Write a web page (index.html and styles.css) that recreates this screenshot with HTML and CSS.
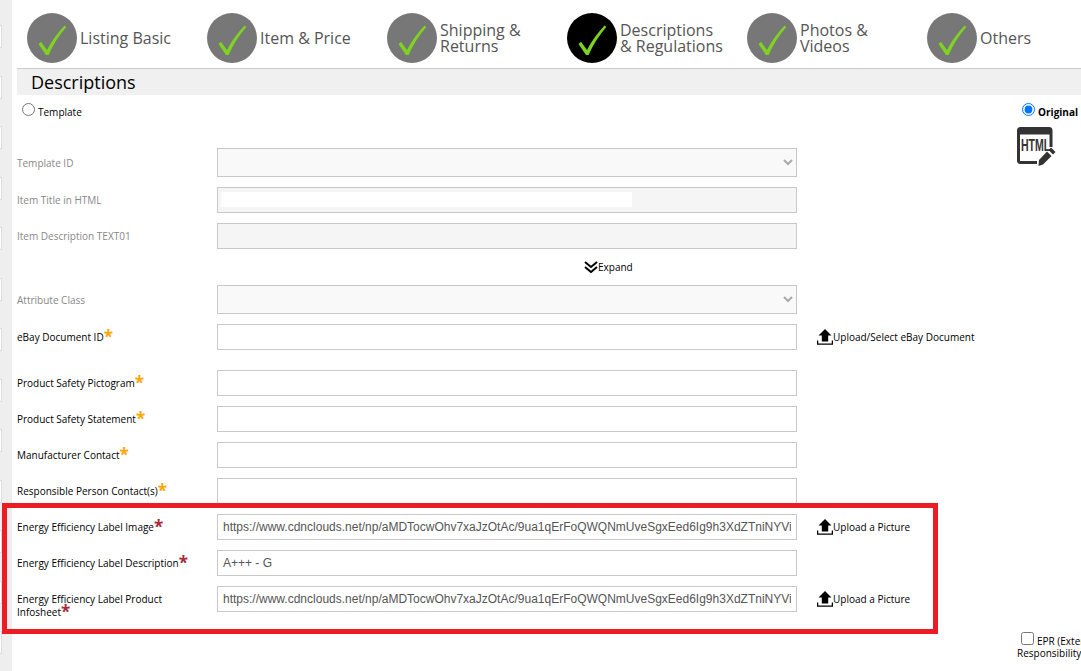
FILE: index.html
```html
<!DOCTYPE html>
<html lang="en">
<head>
<meta charset="utf-8">
<title>Descriptions</title>
<link rel="stylesheet" href="styles.css">
</head>
<body>
<svg class="defs" width="0" height="0" aria-hidden="true">
  <symbol id="check" viewBox="0 0 50 50">
    <path d="M11.5 31 L14 28.8 L20 37 C25 27 31 19.5 37.5 12.5 L39.3 14 C32 22.5 26 31.5 21.6 42 L19 42 Z"/>
  </symbol>
  <symbol id="upload" viewBox="0 0 16 16">
    <path d="M8 0 L14.5 6.5 H11.2 V12.5 H4.8 V6.5 H1.5 Z"/>
    <path class="tray" d="M.6 11.5 V15.2 H15.4 V11.5"/>
  </symbol>
</svg>
<div class="sidebar">
  <i></i><i></i><i></i><i></i><i></i><i></i><i></i><i></i><i></i><i></i><i></i><i></i><i></i>
</div>
<main class="main">
  <nav class="steps">
    <div class="step"><svg class="badge"><use href="#check"/></svg><span>Listing Basic</span></div>
    <div class="step"><svg class="badge"><use href="#check"/></svg><span>Item &amp; Price</span></div>
    <div class="step"><svg class="badge"><use href="#check"/></svg><span>Shipping &amp;<br>Returns</span></div>
    <div class="step active"><svg class="badge"><use href="#check"/></svg><span>Descriptions<br>&amp; Regulations</span></div>
    <div class="step"><svg class="badge"><use href="#check"/></svg><span>Photos &amp;<br>Videos</span></div>
    <div class="step"><svg class="badge"><use href="#check"/></svg><span>Others</span></div>
  </nav>
  <h1 class="title">Descriptions</h1>
  <div class="choice">
    <label class="radio"><input type="radio" name="mode"><span>Template</span></label>
    <div class="original">
      <label class="radio strong"><input type="radio" name="mode" checked><span>Original</span></label>
      <svg class="html-icon" viewBox="0 0 40 40" width="40" height="40">
        <path class="frame" d="M20 35.5 H3.5 Q1.5 35.5 1.5 33.5 V3.5 Q1.5 1.5 3.5 1.5 H32 Q34 1.5 34 3.5 V20"/>
        <rect class="bar" x="1.5" y="1.5" width="32.5" height="6"/>
        <text class="html-text" transform="translate(4 24) scale(.66 1)">HTML</text>
        <path class="pencil" d="M34 20.5 L38.5 25 L36 27.5 L31.5 23 Z M30 24.5 L34.5 29 L26 37.5 L21.5 39 L22 33 Z"/>
      </svg>
    </div>
  </div>
  <form class="form">
    <div class="row off tall"><label>Template ID</label><select disabled><option></option></select></div>
    <div class="row off"><label>Item Title in HTML</label><div class="field"><b></b></div></div>
    <div class="row off"><label>Item Description TEXT01</label><div class="field"></div></div>
    <div class="expand"><svg viewBox="0 0 14 12" width="14" height="12"><path d="M1 1 L7 6 L13 1 M1 6 L7 11 L13 6"/></svg><span>Expand</span></div>
    <div class="row off tall"><label>Attribute Class</label><select disabled><option></option></select></div>
    <div class="row gap"><label>eBay Document ID<em>*</em></label><input type="text"><a class="upload"><svg width="16" height="16"><use href="#upload"/></svg>Upload/Select eBay Document</a></div>
    <div class="row"><label>Product Safety Pictogram<em>*</em></label><input type="text"></div>
    <div class="row"><label>Product Safety Statement<em>*</em></label><input type="text"></div>
    <div class="row"><label>Manufacturer Contact<em>*</em></label><input type="text"></div>
    <div class="row"><label>Responsible Person Contact(s)<em>*</em></label><input type="text"></div>
    <div class="row"><label>Energy Efficiency Label Image<em class="req">*</em></label><input type="text" value="https://www.cdnclouds.net/np/aMDTocwOhv7xaJzOtAc/9ua1qErFoQWQNmUveSgxEed6Ig9h3XdZTniNYVi8kQ2pLx7"><a class="upload"><svg width="16" height="16"><use href="#upload"/></svg>Upload a Picture</a></div>
    <div class="row"><label>Energy Efficiency Label Description<em class="req">*</em></label><input type="text" value="A+++ - G"></div>
    <div class="row"><label>Energy Efficiency Label Product Infosheet<em class="req">*</em></label><input type="text" value="https://www.cdnclouds.net/np/aMDTocwOhv7xaJzOtAc/9ua1qErFoQWQNmUveSgxEed6Ig9h3XdZTniNYVi8kQ2pLx7"><a class="upload"><svg width="16" height="16"><use href="#upload"/></svg>Upload a Picture</a></div>
  </form>
  <div class="epr"><label class="radio"><input type="checkbox"><span>EPR (Extended Producer</span></label><div class="epr-line">Responsibility</div></div>
</main>
<div class="callout"></div>
</body>
</html>
```
FILE: styles.css
```css
* { box-sizing: border-box; }
html, body { height: 100%; }
body {
  margin: 0;
  display: flex;
  overflow: hidden;
  background: #fff;
  color: #000;
  font-family: "Open Sans", "Liberation Sans", sans-serif;
  font-size: 10px;
}
.defs { position: absolute; }
.sidebar {
  flex: 0 0 12px;
  background: #eee;
  display: flex;
  flex-direction: column;
  gap: 27.5px;
  padding-top: 25px;
}
.sidebar i {
  display: block;
  flex: none;
  width: 2px;
  height: 23px;
  background: #fff;
  border: 1px solid #ddd;
  border-left: 0;
}
.main { flex: 1; min-width: 0; padding-left: 5px; }
.steps {
  display: flex;
  height: 68px;
  padding: 13px 0 0 10px;
}
.step {
  flex: 0 0 180px;
  height: 50px;
  display: flex;
  align-items: center;
  gap: 3px;
  font-size: 16px;
  line-height: 16px;
  color: #555;
}
.badge {
  flex: none;
  width: 50px;
  height: 50px;
  border-radius: 50%;
  background: #777;
  fill: #7ed321;
}
.active .badge { background: #000; }
.title {
  margin: 0;
  height: 27px;
  padding-left: 14px;
  border-top: 1px solid #ccc;
  background: #f0f0f0;
  font-size: 18px;
  font-weight: 400;
  line-height: 27px;
}
.choice {
  height: 53px;
  display: flex;
  justify-content: space-between;
  padding: 8px 3px 0 5px;
}
.radio { display: flex; align-items: center; height: 13px; }
.radio input { margin: 0 3px 0 0; width: 13px; height: 13px; }
.radio span { position: relative; top: 2px; }
.strong { font-weight: 700; }
.original { display: flex; flex-direction: column; align-items: flex-start; gap: 11px; }
.html-icon { flex: none; margin-left: -5px; }
.frame { fill: none; stroke: #333; stroke-width: 3; }
.bar { fill: #333; }
.html-text { font: 700 16px "Liberation Sans", sans-serif; fill: #333; }
.pencil { fill: #333; }
.form { display: flex; flex-direction: column; gap: 10px; }
.row {
  display: grid;
  grid-template-columns: 200px 580px auto;
  align-items: center;
  min-height: 26px;
}
.row label { width: 190px; height: 13px; line-height: 13px; }
.tall label { height: 15px; padding-top: 2px; }
.row.gap { margin-bottom: 10px; }
.off label { color: #888; }
.row em {
  font-style: normal;
  font-weight: 700;
  font-size: 17px;
  line-height: 0;
  color: #ffa500;
  vertical-align: -2px;
}
.row em.req { color: #a52a3a; }
input[type="text"], select, .field {
  width: 580px;
  height: 26px;
  border: 1px solid #c8c8c8;
  font: 12px "Liberation Sans", sans-serif;
  color: #555;
  padding: 0 5px;
  background: #fff;
  outline: none;
  border-radius: 0;
}
.tall select { height: 29px; background: #f9f9f9; opacity: 1; color: #aaa; }
.field { background: #f5f5f5; padding: 4px 3px; }
.field b { display: block; width: 411px; height: 15px; background: #fff; }
.expand {
  display: flex;
  align-items: center;
  height: 16px;
  padding-left: 567px;
}
.expand svg { fill: none; stroke: #000; stroke-width: 2; }
.upload {
  margin-left: 20px;
  display: flex;
  align-items: center;
  color: #000;
}
.upload svg { flex: none; fill: #000; }
.tray { fill: none; stroke: #000; stroke-width: 1.3; }
.epr {
  margin: 20px 0 0 1000px;
  white-space: nowrap;
  line-height: 13px;
  overflow: hidden;
  padding-bottom: 4px;
}
.epr .radio { padding-left: 4px; }
.epr .radio span { top: 3px; }
.epr-line { margin-top: 2px; }
.callout {
  position: absolute;
  left: 2px;
  top: 503px;
  width: 936px;
  height: 131px;
  border: 5px solid #ed1c24;
}
```
